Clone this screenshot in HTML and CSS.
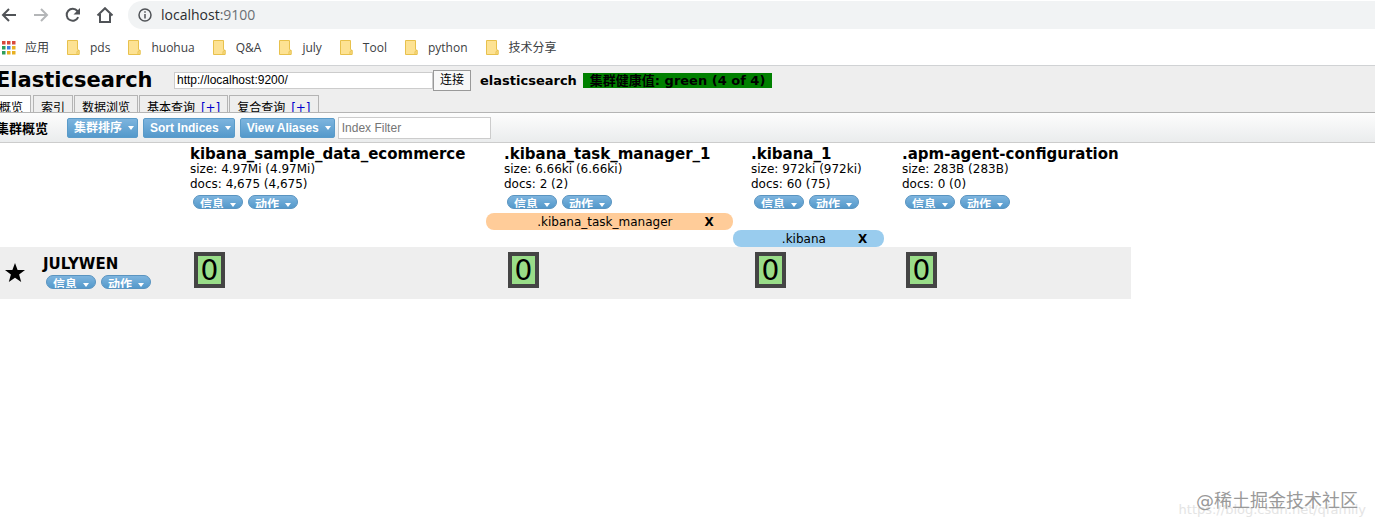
FILE: index.html
```
<!DOCTYPE html>
<html lang="zh-CN">
<head>
  <meta charset="UTF-8">
  <title>elasticsearch-head</title>
  <link rel="stylesheet" href="styles.css">
</head>
<body>
  <div class="browser">
    <div class="nav-bar">
      <button class="nav-btn" aria-label="Back"><svg width="16" height="16" viewBox="0 0 16 16"><path d="M15 8H2M8 2L2 8l6 6"/></svg></button>
      <button class="nav-btn disabled" aria-label="Forward"><svg width="16" height="16" viewBox="0 0 16 16"><path d="M1 8h13M8 2l6 6-6 6"/></svg></button>
      <button class="nav-btn" aria-label="Reload"><svg width="16" height="16" viewBox="0 0 16 16"><path d="M13.2 10.2A6 6 0 1 1 12.4 4L14 6"/><path class="fill" d="M15 1v6.500H8.500z"/></svg></button>
      <button class="nav-btn" aria-label="Home"><svg width="18" height="16" viewBox="0 0 18 16"><path d="M1.500 8.500L9 1.200l7.500 7.300M4 7v8h10V7"/></svg></button>
      <div class="address">
        <svg width="14" height="14" viewBox="0 0 14 14"><circle cx="7" cy="7" r="6"/><path d="M7 6v4.500M7 3.300v1.500"/></svg>
        <span>localhost<span class="port">:9100</span></span>
      </div>
    </div>
    <div class="bookmarks">
      <a href="#" class="apps">
        <svg width="14" height="14" viewBox="0 0 14 14">
          <path fill="#d9483b" d="M0 0h3.500v3.500H0zM5 0h3.500v3.500H5zM10 0h3.500v3.500H10z"/>
          <path fill="#2f9e5b" d="M0 5h3.500v3.500H0zM0 10h3.500v3.500H0z"/>
          <path fill="#3d7de0" d="M5 5h3.500v3.500H5z"/>
          <path fill="#e8b021" d="M10 5h3.500v3.500H10zM5 10h3.500v3.500H5zM10 10h3.500v3.500H10z"/>
        </svg>应用</a>
      <a href="#"><svg class="folder" width="14" height="15" viewBox="0 0 14 15"><path d="M.5.5h10v9l1.500 1v4H.5z"/><path d="M10 14.500v-3l2-1.500v4.500z"/></svg>pds</a>
      <a href="#"><svg class="folder" width="14" height="15" viewBox="0 0 14 15"><path d="M.5.5h10v9l1.500 1v4H.5z"/><path d="M10 14.500v-3l2-1.500v4.500z"/></svg>huohua</a>
      <a href="#"><svg class="folder" width="14" height="15" viewBox="0 0 14 15"><path d="M.5.5h10v9l1.500 1v4H.5z"/><path d="M10 14.500v-3l2-1.500v4.500z"/></svg>Q&amp;A</a>
      <a href="#"><svg class="folder" width="14" height="15" viewBox="0 0 14 15"><path d="M.5.5h10v9l1.500 1v4H.5z"/><path d="M10 14.500v-3l2-1.500v4.500z"/></svg>july</a>
      <a href="#"><svg class="folder" width="14" height="15" viewBox="0 0 14 15"><path d="M.5.5h10v9l1.500 1v4H.5z"/><path d="M10 14.500v-3l2-1.500v4.500z"/></svg>Tool</a>
      <a href="#"><svg class="folder" width="14" height="15" viewBox="0 0 14 15"><path d="M.5.5h10v9l1.500 1v4H.5z"/><path d="M10 14.500v-3l2-1.500v4.500z"/></svg>python</a>
      <a href="#"><svg class="folder" width="14" height="15" viewBox="0 0 14 15"><path d="M.5.5h10v9l1.500 1v4H.5z"/><path d="M10 14.500v-3l2-1.500v4.500z"/></svg>技术分享</a>
    </div>
  </div>

  <div class="app">
    <div class="header">
      <div class="connect">
        <h1>Elasticsearch</h1>
        <input type="text" class="uri" aria-label="URI" value="http://localhost:9200/"><button class="connect-btn">连接</button>
        <span class="cluster-name">elasticsearch</span>
        <span class="health">集群健康值: green (4 of 4)</span>
      </div>
      <div class="tabs">
        <button class="tab active">概览</button>
        <button class="tab">索引</button>
        <button class="tab">数据浏览</button>
        <button class="tab">基本查询 <span class="plus">[+]</span></button>
        <button class="tab">复合查询 <span class="plus">[+]</span></button>
      </div>
    </div>

    <div class="toolbar">
      <h2>集群概览</h2>
      <button class="menu-btn">集群排序</button>
      <button class="menu-btn">Sort Indices</button>
      <button class="menu-btn">View Aliases</button>
      <input type="text" class="filter" aria-label="Index Filter" placeholder="Index Filter">
    </div>

    <table class="cluster">
      <colgroup>
        <col class="col-node">
        <col class="col-wide">
        <col class="col-mid">
        <col class="col-small">
        <col class="col-mid">
      </colgroup>
      <thead>
        <tr>
          <td class="node-col"></td>
          <th>
            <h3>kibana_sample_data_ecommerce</h3>
            <div>size: 4.97Mi (4.97Mi)</div>
            <div>docs: 4,675 (4,675)</div>
            <div class="actions"><button class="pill">信息</button><button class="pill">动作</button></div>
          </th>
          <th>
            <h3>.kibana_task_manager_1</h3>
            <div>size: 6.66ki (6.66ki)</div>
            <div>docs: 2 (2)</div>
            <div class="actions"><button class="pill">信息</button><button class="pill">动作</button></div>
          </th>
          <th>
            <h3>.kibana_1</h3>
            <div>size: 972ki (972ki)</div>
            <div>docs: 60 (75)</div>
            <div class="actions"><button class="pill">信息</button><button class="pill">动作</button></div>
          </th>
          <th>
            <h3>.apm-agent-configuration</h3>
            <div>size: 283B (283B)</div>
            <div>docs: 0 (0)</div>
            <div class="actions"><button class="pill">信息</button><button class="pill">动作</button></div>
          </th>
        </tr>
        <tr class="alias-row">
          <td colspan="2"></td>
          <td><div class="alias orange"><span>.kibana_task_manager</span><button>X</button></div></td>
          <td colspan="2"></td>
        </tr>
        <tr class="alias-row">
          <td colspan="3"></td>
          <td><div class="alias blue"><span>.kibana</span><button>X</button></div></td>
          <td></td>
        </tr>
      </thead>
      <tbody>
        <tr class="node-row">
          <td class="node-col">
            <div class="node">
              <svg width="20" height="20" viewBox="0 0 20 20"><path d="M10 0l2.600 7H20l-5.900 4.600L16.200 19 10 14.700 3.800 19l2.100-7.400L0 7h7.400z"/></svg>
              <div>
                <h3>JULYWEN</h3>
                <div class="actions"><button class="pill">信息</button><button class="pill">动作</button></div>
              </div>
            </div>
          </td>
          <td><button class="shard">0</button></td>
          <td><button class="shard">0</button></td>
          <td><button class="shard">0</button></td>
          <td><button class="shard">0</button></td>
        </tr>
      </tbody>
    </table>
  </div>

  <div class="watermark blog">https://blog.csdn.net/qfamily</div>
  <div class="watermark community">@稀土掘金技术社区</div>
</body>
</html>
```
FILE: styles.css
```
* {
  box-sizing: border-box;
}
body {
  margin: 0;
  min-height: 100vh;
  position: relative;
  overflow-x: hidden;
  background: #fff;
  color: #000;
  font: 12px/15px "DejaVu Sans", "Noto Sans CJK SC", sans-serif;
}
h1, h2, h3 {
  margin: 0;
}
button {
  font: inherit;
  margin: 0;
  padding: 0;
  border: none;
  background: none;
  cursor: pointer;
}

/* browser chrome */
.browser {
  border-bottom: 1px solid #d0d2d4;
  font-family: "Open Sans", "Noto Sans CJK SC", sans-serif;
}
.nav-bar {
  display: flex;
  align-items: center;
  height: 30px;
}
.nav-btn {
  display: flex;
  justify-content: center;
  width: 32px;
  margin-left: -7px;
  margin-right: 7px;
}
.nav-btn svg, .address svg {
  fill: none;
  stroke: #505357;
  stroke-width: 2;
}
.nav-btn .fill {
  fill: #505357;
  stroke: none;
}
.nav-btn.disabled svg {
  stroke: #b4b6b8;
}
.address {
  flex: 1;
  display: flex;
  align-items: center;
  gap: 9px;
  height: 28px;
  padding: 0 0 1px 10px;
  border-radius: 14px 0 0 14px;
  background: #f1f3f4;
  color: #2b2d30;
  font-size: 14px;
}
.address svg {
  stroke-width: 1.500;
}
.port {
  color: #6b6f73;
}
.bookmarks {
  display: flex;
  align-items: center;
  gap: 18px;
  height: 35px;
  padding-left: 2px;
}
.bookmarks a {
  display: flex;
  align-items: center;
  gap: 9px;
  color: #3c4043;
  font-size: 12px;
  text-decoration: none;
}
.folder {
  fill: #fde293;
  stroke: #e8c14c;
}

/* header */
.app {
  margin-left: -4px;
}
.header {
  background: #eee;
  border-bottom: 1px solid #b4b4b4;
}
.connect {
  display: flex;
  align-items: center;
  height: 29px;
  padding-bottom: 1px;
  font-size: 13px;
  font-weight: bold;
}
.connect h1 {
  width: 178px;
  font-size: 21px;
  line-height: 24px;
}
.uri {
  width: 259px;
  height: 17px;
  padding: 0 2px;
  border: 1px solid #ccc;
  font: 12px "Liberation Sans", sans-serif;
}
.connect-btn {
  width: 38px;
  height: 21px;
  border: 1px solid #999;
  background: #f8f8f8;
  font-size: 12px;
  font-weight: normal;
}
.cluster-name {
  margin: 0 6px 0 9px;
}
.health {
  padding: 0 7px;
  background: #008000;
}
.tabs {
  display: flex;
  gap: 1px;
}
.tab {
  height: 17px;
  padding: 4px 7px 0;
  border: 1px solid #b4b4b4;
  border-bottom: none;
  line-height: 16px;
  white-space: nowrap;
  overflow: hidden;
}
.tab.active {
  padding-left: 2px;
  margin-right: 1px;
  background: #fff;
}
.plus {
  margin-left: 2px;
  color: #00c;
}

/* toolbar */
.toolbar {
  display: flex;
  align-items: center;
  gap: 5px;
  height: 30px;
  border-bottom: 1px solid #ccc;
  background: linear-gradient(#fdfdfd, #eaeced);
}
.toolbar h2 {
  margin-right: 14px;
  padding-top: 2px;
  font-size: 13px;
}
.menu-btn {
  height: 20px;
  padding: 0 3px 0 6px;
  border: 1px solid #5a9bc9;
  border-radius: 2px;
  background: linear-gradient(#7db4de, #5499cb);
  color: #fff;
  font: bold 12px/18px "Liberation Sans", "Noto Sans CJK SC", sans-serif;
}
.menu-btn::after, .pill::after {
  content: "";
  display: inline-block;
  margin-left: 6px;
  vertical-align: 2px;
  border: 3px solid transparent;
  border-top: 4px solid #fff;
  border-bottom: none;
}
.filter {
  width: 153px;
  height: 22px;
  margin-left: -2px;
  padding: 0 3px;
  border: 1px solid #ccc;
  font: 12px "Liberation Sans", sans-serif;
}

/* cluster table */
.cluster {
  border-collapse: collapse;
}
.col-node {
  width: 176px;
}
.col-wide {
  width: 314px;
}
.col-mid {
  width: 247px;
}
.col-small {
  width: 151px;
}
.cluster td, .cluster th {
  padding: 3px 12px 4px 18px;
  font-weight: normal;
  text-align: left;
  vertical-align: top;
  white-space: nowrap;
}
.cluster h3 {
  font-size: 15px;
  line-height: 16px;
}
.cluster td.node-col {
  padding: 8px 0 0 9px;
}
.actions {
  display: flex;
  gap: 5px;
  padding: 3px 3px 0;
}
.pill {
  width: 50px;
  height: 14px;
  padding-top: 2px;
  border: 1px solid #5a94c0;
  border-radius: 7px;
  background: linear-gradient(#7db4de, #5499cb);
  color: #fff;
  font-weight: bold;
  overflow: hidden;
}
.cluster .alias-row td {
  height: 17px;
  padding: 0;
}
.alias {
  display: flex;
  justify-content: center;
  gap: 32px;
  padding: 1px 18px 0 50px;
  height: 17px;
  line-height: 16px;
  border-radius: 8px;
}
.alias button {
  font-weight: bold;
}
.alias.orange {
  background: #fc9;
}
.alias.blue {
  padding: 1px 16px 0 48px;
  background: #9ce;
}
.node-row {
  height: 52px;
  background: #eee;
}
.cluster .node-row td {
  padding-top: 5px;
}
.cluster .node-row .node-col {
  padding-top: 9px;
}
.node {
  display: flex;
  align-items: center;
  gap: 18px;
}
.shard {
  display: block;
  width: 31px;
  height: 36px;
  margin-left: 4px;
  padding-top: 1px;
  border: 4px solid #444;
  background: #9d8;
  font-size: 28px;
  line-height: 28px;
}

/* watermarks */
.watermark {
  position: absolute;
  white-space: nowrap;
}
.community {
  right: 17px;
  bottom: 16px;
  color: #999;
  font-size: 18px;
  line-height: 22px;
}
.blog {
  right: 9px;
  bottom: 8px;
  color: #e4e4e4;
  font-size: 13px;
  line-height: 20px;
}
```
